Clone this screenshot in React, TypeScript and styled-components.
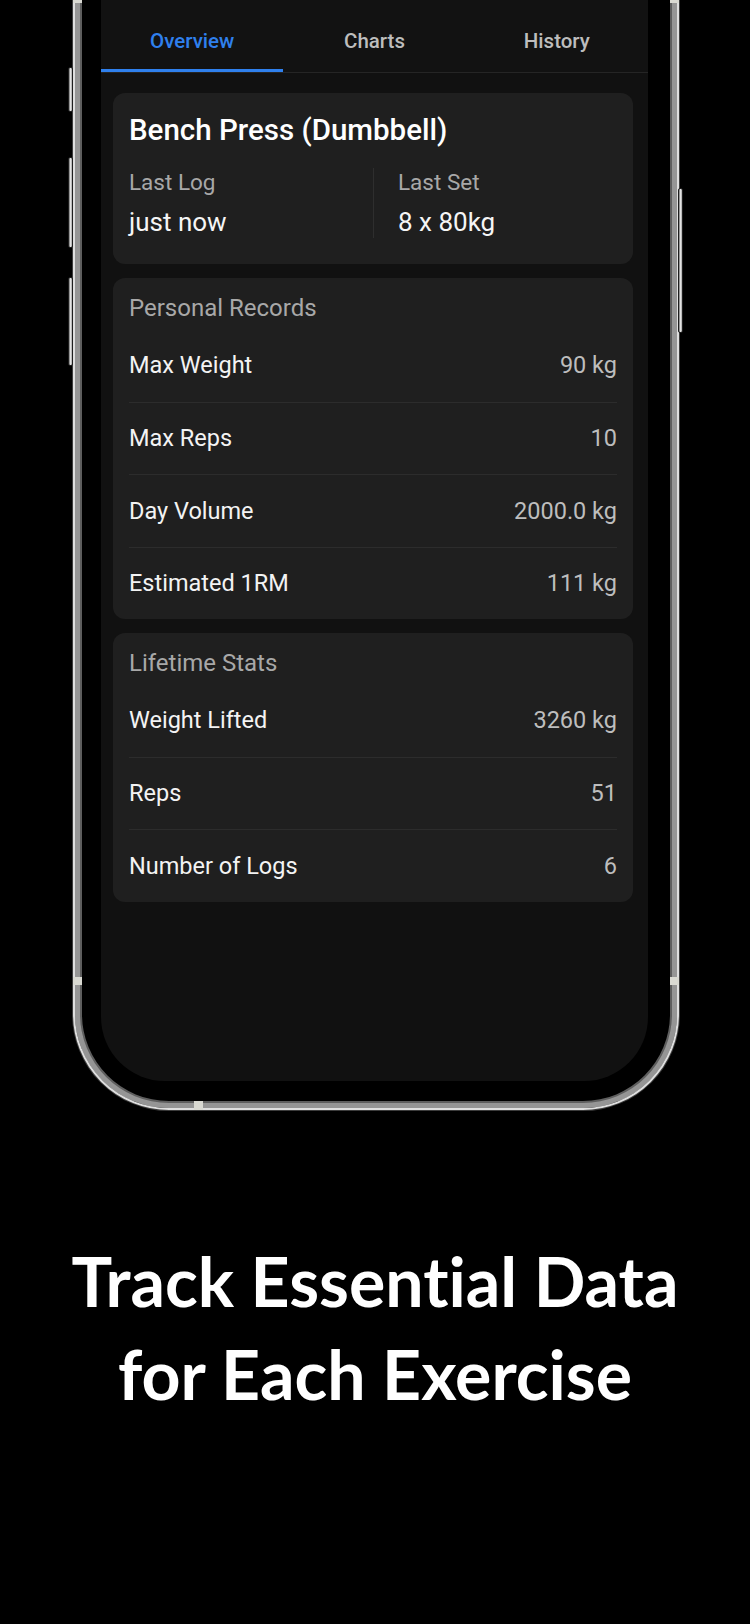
import React from "react";
import styled, { createGlobalStyle } from "styled-components";

const GlobalStyle = createGlobalStyle`
  html, body { margin: 0; padding: 0; background: #000; }
  body { width: 750px; height: 1624px; overflow: hidden; }
  #root { width: 750px; height: 1624px; }
  * { box-sizing: border-box; }
`;

const Page = styled.div`
  width: 750px;
  height: 1624px;
  background: #000;
  display: flex;
  flex-direction: column;
  align-items: flex-start;
  overflow: hidden;
  font-family: Roboto, "Liberation Sans", sans-serif;
`;

const PhoneWrap = styled.div`
  position: relative;
  margin: -20px 0 0 73px;
  width: 606px;
`;

const Frame = styled.div`
  width: 606px;
  height: 1130px;
  background: #000;
  border: 2px solid #dedede;
  border-radius: 0 0 96px 96px;
  box-shadow: 0 0 0 1px #3c3c3c, inset 0 0 0 5px #959595, inset 0 0 0 7px #5e5e5e;
  padding: 0 29px 27px 26px;
  display: flex;
`;

const SideButton = styled.div<{ $side: "left" | "right"; $top: number; $h: number }>`
  position: absolute;
  top: ${(p) => p.$top}px;
  height: ${(p) => p.$h}px;
  width: 5px;
  ${(p) => (p.$side === "left" ? "left: -5px;" : "right: -4px;")}
  border: 1px solid #1e1e1e;
  border-radius: 2px;
  background: linear-gradient(90deg, #6d6d6d, #f0f0f0 55%, #9a9a9a);
`;

const Band = styled.div<{ $pos: "left" | "right" | "bottom" | "topL" | "topR"; $top?: number }>`
  position: absolute;
  background: #d9d9d2;
  ${(p) =>
    p.$pos === "left"
      ? `left: 0; width: 9px; top: ${p.$top}px; height: 8px;`
      : p.$pos === "right"
      ? `right: 0; width: 9px; top: ${p.$top}px; height: 8px;`
      : p.$pos === "topL"
      ? `left: 0; width: 9px; top: 20px; height: 3px;`
      : p.$pos === "topR"
      ? `right: 0; width: 9px; top: 20px; height: 3px;`
      : `left: 121px; width: 9px; bottom: 0; height: 9px;`}
`;

const Screen = styled.div`
  flex: 1;
  background: #111111;
  border-radius: 0 0 64px 64px;
  overflow: hidden;
  display: flex;
  flex-direction: column;
`;

const TabBar = styled.div`
  display: grid;
  grid-template-columns: repeat(3, 1fr);
  padding-top: 20px;
  background: #121212;
  border-bottom: 1px solid #252525;
`;

const Tab = styled.div<{ $active?: boolean }>`
  height: 70px;
  padding-top: 10px;
  display: flex;
  align-items: center;
  justify-content: center;
  font-size: 20.5px;
  font-weight: 500;
  color: ${(p) => (p.$active ? "#2f80ed" : "#bdbdbd")};
  border-bottom: 3px solid ${(p) => (p.$active ? "#2f80ed" : "transparent")};
`;

const Content = styled.div`
  display: flex;
  flex-direction: column;
  gap: 14px;
  padding: 20px 15px 0 12px;
`;

const Card = styled.div`
  background: #1f1f1f;
  border-radius: 12px;
  padding: 16px 16px 0;
`;

const SummaryCard = styled(Card)`
  padding: 20px 16px 26px;
`;

const Title = styled.div`
  font-size: 29.5px;
  font-weight: 500;
  line-height: 34px;
  color: #ffffff;
`;

const StatsGrid = styled.div`
  display: grid;
  grid-template-columns: 1fr 1fr;
  margin-top: 21px;
`;

const StatCol = styled.div<{ $divided?: boolean }>`
  display: flex;
  flex-direction: column;
  gap: 10px;
  ${(p) => (p.$divided ? "border-left: 1px solid #2e2e2e; padding-left: 24px;" : "")}
`;

const StatLabel = styled.div`
  font-size: 22.5px;
  line-height: 28px;
  color: #a8a8a8;
`;

const StatValue = styled.div`
  font-size: 26px;
  line-height: 32px;
  color: #f5f5f5;
`;

const SectionTitle = styled.div`
  font-size: 24px;
  line-height: 28px;
  color: #a8a8a8;
  margin-bottom: 7px;
`;

const Row = styled.div`
  height: 72.5px;
  display: flex;
  align-items: center;
  justify-content: space-between;
  font-size: 23.5px;
  & + & {
    border-top: 1px solid #2c2c2c;
  }
`;

const RowLabel = styled.span`
  color: #f3f3f3;
`;

const RowValue = styled.span`
  color: #bdbdbd;
`;

const Headline = styled.h1`
  margin: 124px 0 0;
  width: 100%;
  text-align: center;
  font-family: Lato, "Open Sans", sans-serif;
  font-weight: 700;
  font-size: 68px;
  line-height: 93px;
  font-variant-ligatures: none;
  font-feature-settings: "liga" 0, "clig" 0;
  color: #ffffff;
`;

const records = [
  ["Max Weight", "90 kg"],
  ["Max Reps", "10"],
  ["Day Volume", "2000.0 kg"],
  ["Estimated 1RM", "111 kg"],
];

const lifetime = [
  ["Weight Lifted", "3260 kg"],
  ["Reps", "51"],
  ["Number of Logs", "6"],
];

export default function App() {
  return (
    <>
      <GlobalStyle />
      <Page>
        <PhoneWrap>
          <SideButton $side="left" $top={87} $h={45} />
          <SideButton $side="left" $top={177} $h={91} />
          <SideButton $side="left" $top={297} $h={89} />
          <SideButton $side="right" $top={208} $h={145} />
          <Frame>
            <Screen>
              <TabBar>
                <Tab $active>Overview</Tab>
                <Tab>Charts</Tab>
                <Tab>History</Tab>
              </TabBar>
              <Content>
                <SummaryCard>
                  <Title>Bench Press (Dumbbell)</Title>
                  <StatsGrid>
                    <StatCol>
                      <StatLabel>Last Log</StatLabel>
                      <StatValue>just now</StatValue>
                    </StatCol>
                    <StatCol $divided>
                      <StatLabel>Last Set</StatLabel>
                      <StatValue>8 x 80kg</StatValue>
                    </StatCol>
                  </StatsGrid>
                </SummaryCard>
                <Card>
                  <SectionTitle>Personal Records</SectionTitle>
                  {records.map(([l, v]) => (
                    <Row key={l}>
                      <RowLabel>{l}</RowLabel>
                      <RowValue>{v}</RowValue>
                    </Row>
                  ))}
                </Card>
                <Card>
                  <SectionTitle>Lifetime Stats</SectionTitle>
                  {lifetime.map(([l, v]) => (
                    <Row key={l}>
                      <RowLabel>{l}</RowLabel>
                      <RowValue>{v}</RowValue>
                    </Row>
                  ))}
                </Card>
              </Content>
            </Screen>
          </Frame>
          <Band $pos="topL" />
          <Band $pos="topR" />
          <Band $pos="left" $top={997} />
          <Band $pos="right" $top={997} />
          <Band $pos="bottom" />
        </PhoneWrap>
        <Headline>
          Track Essential Data
          <br />
          for Each Exercise
        </Headline>
      </Page>
    </>
  );
}
